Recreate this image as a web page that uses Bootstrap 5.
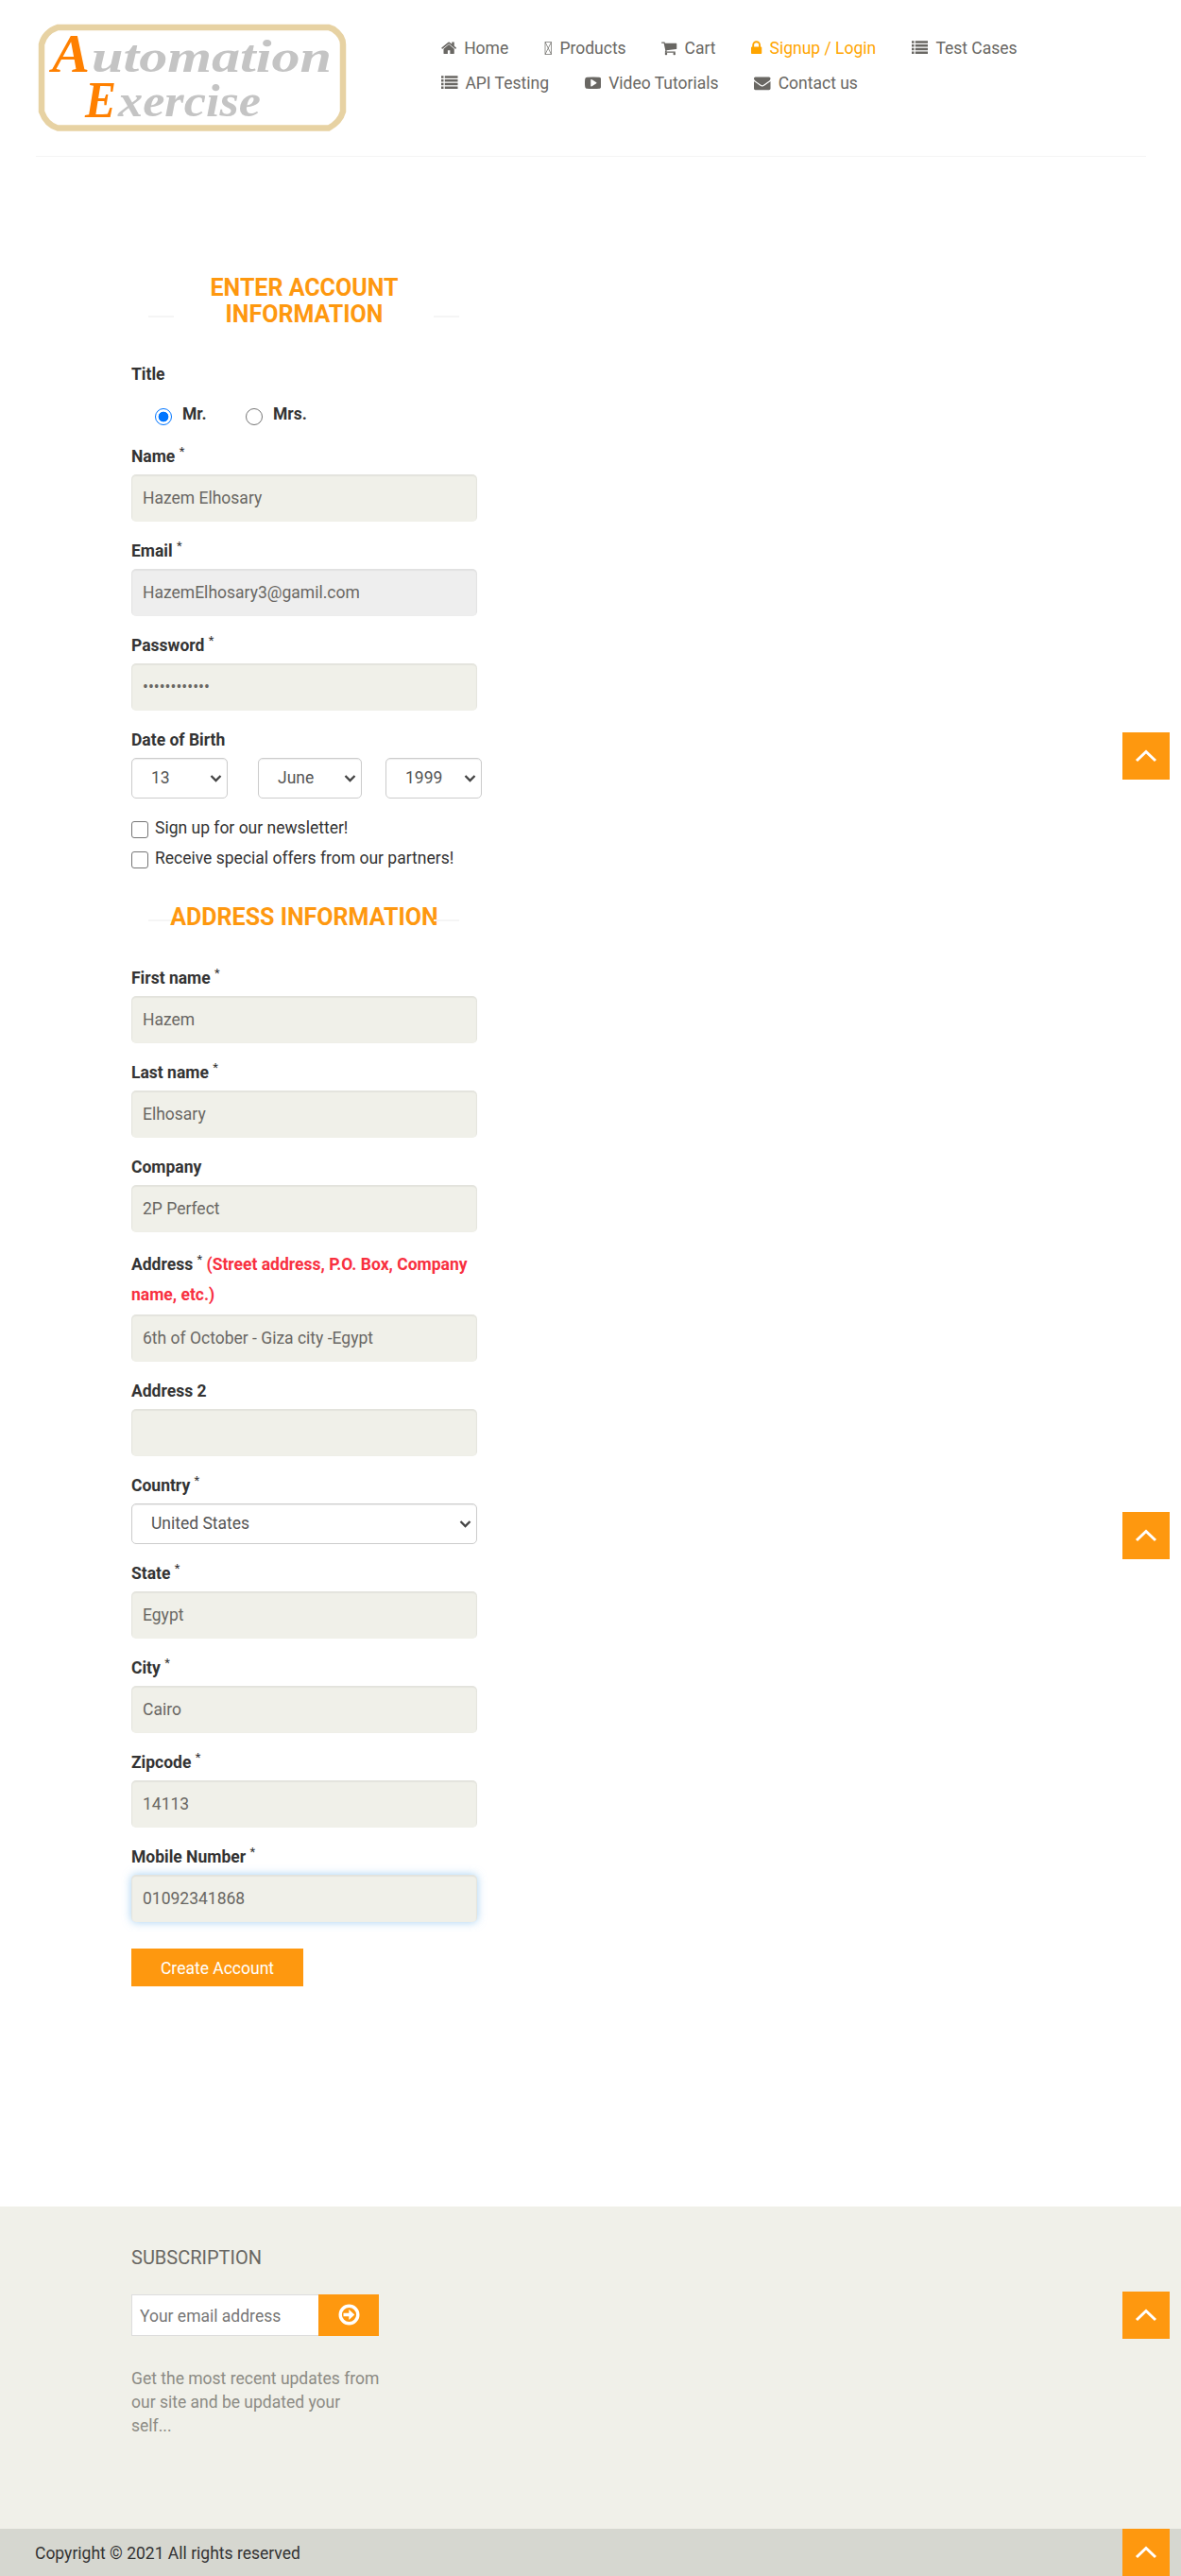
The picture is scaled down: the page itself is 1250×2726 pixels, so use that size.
<!DOCTYPE html>
<html lang="en">
<head>
<meta charset="utf-8">
<meta name="viewport" content="width=device-width, initial-scale=1">
<title>Automation Exercise - Signup</title>
<link href="https://cdn.jsdelivr.net/npm/bootstrap@5.3.0/dist/css/bootstrap.min.css" rel="stylesheet">
<style>
body{font-family:Roboto,sans-serif;font-size:17.5px;line-height:25px;color:#333;background:#fff;letter-spacing:0;position:relative}
.site-header{height:166px;margin:0 37px 0 38px;border-bottom:1px solid #f5f5f5}
.logo-link{display:block;width:328px;margin-top:25px;margin-left:2px}
.logo-link svg{display:block}
.top-nav{margin-left:99px;padding-top:33px;width:700px}
.top-nav .nav-list{column-gap:37.8px;row-gap:0}
.top-nav a{color:#696763;text-decoration:none;height:37px;line-height:37px;gap:7.900px;white-space:nowrap}
.top-nav a.current{color:orange}
.top-nav svg{fill:currentColor;height:17.5px;flex:none;margin-top:-1px}
.form-zone{width:366px;margin-left:139px;padding-top:125px;height:2168px}
.zone-title{font-size:25px;line-height:27.5px;font-weight:700;color:#fe980f;margin:0;text-align:center;text-transform:uppercase;position:relative}
.zone-title span{display:block;position:relative}
.zone-title::before,.zone-title::after{content:"";position:absolute;width:27px;height:2px;background:#f5f5f5;bottom:10px}
.zone-title::before{left:18px}
.zone-title::after{right:19px}
.second-title{margin:30px 0 38.5px}
.title-block{margin-top:38px}
.radio-row{height:25px;margin:17px 0 20px 25px}
.radio-row label{margin-left:11px;line-height:25px}
.radio-row .mr-text{width:67px}
.radio-row .choice{margin-top:6px!important}
.field{margin-bottom:19px}
.field-label{display:block;font-weight:700;line-height:25px;height:25px;margin-bottom:6px;color:#333}
.field-label sup{font-weight:400;font-size:75%;top:-.5em}
.tall-label{height:auto;line-height:32px;margin-top:-1px;margin-bottom:5px;position:relative;top:0}
.tall-label em{font-style:normal;color:#f8303f}
.entry{height:50px;border:0;border-radius:5px;background:#f0f0e9;color:#696763;font-size:17.5px;font-weight:400;padding:0 12px;box-shadow:inset 0 1px 1px 1px rgba(0,0,0,.05)}
.entry:disabled{background:#eee;opacity:1}
.entry:focus,.entry.active-entry{background:#f0f0e9;color:#696763;box-shadow:inset 0 1px 1px 1px rgba(0,0,0,.05),0 0 10px rgba(102,175,233,.6)}
.picker{height:43px;border:1px solid #ccc;border-radius:5px;color:#555;font-size:17.5px;padding:0 20px;box-shadow:inset 0 1px 1px rgba(0,0,0,.075);background-position:right 5px center;background-size:13px 13px;background-image:url("data:image/svg+xml,%3csvg xmlns='http://www.w3.org/2000/svg' viewBox='0 0 13 13'%3e%3cpath fill='none' stroke='%23444' stroke-width='2.3' d='M1.5 4l5 5 5-5'/%3e%3c/svg%3e")}
.day-pick{width:102px;margin-right:32px}
.month-pick{width:110px;margin-right:25px}
.year-pick{width:102px}
.birth-row{width:371px;margin-bottom:19px}
.opt-row{height:31.500px;align-items:flex-start}
.opt-row label{margin-left:7px}
.opt-row .choice{margin-top:5px!important}
.choice{width:18px;height:18px;margin:0;border:1px solid #767676;flex:none;background-color:#fff}
.choice:checked[type=radio]{background:#fff radial-gradient(circle,#0075ff 0 5px,#fff 5.7px);border:1.3px solid #0075ff}
.tick.form-check-input{border-radius:3px}
.orange-btn{background:#fe980f;border:0;border-radius:0;color:#fff;font-size:17.5px;font-weight:400}
.create-btn{width:182px;height:40px;margin-top:9px;padding:2px 0 0}
.site-footer{background:#f0f0e9;height:341px;padding:40px 0 0 139px;margin-top:1px}
.sub-title{font-size:20px;line-height:28px;font-weight:400;color:#696763;margin:0 0 25px}
.sub-mail{width:198px;height:44px;border:1px solid #ddd;border-right:0;border-radius:0;font-size:17.5px;padding:2px 8px 0;font-weight:400;color:#777}
.sub-mail::placeholder{color:#777}
.sub-go{width:64px;height:44px;padding:0 0 2px}
.sub-text{width:264px;color:#8c8b84;margin:33px 0 0}
.copy-bar{background:#d6d7d0;height:50px;padding:14px 37px 0;line-height:25px}
.to-top{position:absolute;left:1188px;width:50px;height:50px;background:#fe980f;display:flex;align-items:center;justify-content:center}
.top-a{top:775px}.top-b{top:1600px}.top-c{top:2425px}.top-d{top:2676px}
</style>
</head>
<body>
<header class="site-header d-flex align-items-start">
  <a class="logo-link" href="#" aria-label="Automation Exercise">
    <svg width="328" height="115" viewBox="0 0 328 115">
      <path d="M21 4H308L313 6Q323 13 323 22V93Q320 104 308 110.500H21Q9 107 4 93V22Q7 9 21 4Z" fill="#fff" stroke="#e7d2a3" stroke-width="6.500"/>
      <g font-family="'Liberation Serif', serif" font-style="italic" font-weight="700" font-size="49">
        <text x="15" y="51" fill="#ff8000" font-size="56" textLength="40" lengthAdjust="spacingAndGlyphs">A</text>
        <text x="57" y="51" fill="#c4c4c4" textLength="254" lengthAdjust="spacingAndGlyphs">utomation</text>
        <text x="50" y="99" fill="#ff8000" font-size="54" textLength="33" lengthAdjust="spacingAndGlyphs">E</text>
        <text x="85" y="98" fill="#c4c4c4" textLength="151" lengthAdjust="spacingAndGlyphs">xercise</text>
      </g>
    </svg>
  </a>
  <nav class="top-nav">
    <div class="nav-list d-flex flex-wrap">
      <a href="#" class="d-flex align-items-center"><svg width="16.25" viewBox="64 0 1664 1792"><path d="M1472 992v480q0 26-19 45t-45 19h-384v-384h-256v384h-384q-26 0-45-19t-19-45v-480q0-1 .5-3t.5-3l575-474 575 474q1 2 1 6zm223-69l-62 74q-8 9-21 11h-3q-13 0-21-7l-692-577-692 577q-12 8-24 7-13-2-21-11l-62-74q-8-10-7-23.500t11-21.500l719-599q32-26 76-26t76 26l244 204v-195q0-14 9-23t23-9h192q14 0 23 9t9 23v408l219 182q10 8 11 21.500t-7 23.500z"/></svg>Home</a>
      <a href="#" class="d-flex align-items-center"><svg width="8.500" viewBox="0 0 8.500 17.500"><path d="M1 2.500H7.500V15.500H1ZM1 2.500L7.500 15.500M7.500 2.500L1 15.500" fill="none" stroke="currentColor" stroke-width=".7"/></svg>Products</a>
      <a href="#" class="d-flex align-items-center"><svg width="16.25" viewBox="64 0 1664 1792"><path d="M704 1536q0 52-38 90t-90 38-90-38-38-90 38-90 90-38 90 38 38 90zm896 0q0 52-38 90t-90 38-90-38-38-90 38-90 90-38 90 38 38 90zm128-1088v512q0 24-16.500 42.500t-40.500 21.500l-1044 122q13 60 13 70 0 16-24 64h920q26 0 45 19t19 45-19 45-45 19h-1024q-26 0-45-19t-19-45q0-11 8-31.500t16-36 21.500-40 15.500-29.500l-177-823h-204q-26 0-45-19t-19-45 19-45 45-19h256q16 0 28.500 6.500t19.500 15.500 13 24.500 8 26 5.500 29.500 4.500 26h1201q26 0 45 19t19 45z"/></svg>Cart</a>
      <a href="#" class="current d-flex align-items-center"><svg width="11.25" viewBox="320 0 1152 1792"><path d="M640 768h512v-192q0-106-75-181t-181-75-181 75-75 181v192zm832 96v576q0 40-28 68t-68 28h-960q-40 0-68-28t-28-68v-576q0-40 28-68t68-28h32v-192q0-184 132-316t316-132 316 132 132 316v192h32q40 0 68 28t28 68z"/></svg>Signup / Login</a>
      <a href="#" class="d-flex align-items-center"><svg width="17.500" viewBox="0 0 1792 1792"><path d="M0 128h256v256H0zM384 128h1408v256H384zM0 512h256v256H0zM384 512h1408v256H384zM0 896h256v256H0zM384 896h1408v256H384zM0 1280h256v256H0zM384 1280h1408v256H384z"/></svg>Test Cases</a>
      <a href="#" class="d-flex align-items-center"><svg width="17.500" viewBox="0 0 1792 1792"><path d="M0 128h256v256H0zM384 128h1408v256H384zM0 512h256v256H0zM384 512h1408v256H384zM0 896h256v256H0zM384 896h1408v256H384zM0 1280h256v256H0zM384 1280h1408v256H384z"/></svg>API Testing</a>
      <a href="#" class="d-flex align-items-center"><svg width="17.500" viewBox="0 0 1792 1792"><path fill-rule="evenodd" d="M1280 896q0-37-30-54l-512-320q-31-20-65-2-33 18-33 56v640q0 38 33 56 16 8 31 8 20 0 34-10l512-320q30-17 30-54zm512 0q0 96-1 150t-8.500 136.500-22.500 147.500q-16 73-69 123t-124 58q-222 25-671 25t-671-25q-71-8-124.500-58t-69.500-123q-14-65-21.500-147.500t-8.500-136.500-1-150 1-150 8.500-136.500 22.500-147.500q16-73 69-123t124-58q222-25 671-25t671 25q71 8 124.500 58t69.500 123q14 65 21.500 147.500t8.500 136.500 1 150z"/></svg>Video Tutorials</a>
      <a href="#" class="d-flex align-items-center"><svg width="17.500" viewBox="0 0 1792 1792"><path d="M1792 710v794q0 66-47 113t-113 47h-1472q-66 0-113-47t-47-113v-794q44 49 101 87 362 246 497 345 57 42 92.500 65.500t94.500 48 110 24.500h2q51 0 110-24.500t94.500-48 92.500-65.500q170-123 498-345 57-39 100-87zm0-294q0 79-49 151t-122 123q-376 261-468 325-10 7-42.500 31t-54 38.500-52 32.500-57.500 27-50 9h-2q-23 0-50-9t-57.500-27-52-32.500-54-38.500-42.500-31q-91-64-262-182.500t-205-142.500q-62-42-117-115.500t-55-136.500q0-78 41.500-130t118.500-52h1472q65 0 112.500 47t47.500 113z"/></svg>Contact us</a>
    </div>
  </nav>
</header>

<main class="form-zone">
  <h2 class="zone-title"><span>Enter Account<br>Information</span></h2>
  <form>
    <div class="title-block">
      <label class="field-label mb-0">Title</label>
      <div class="radio-row d-flex align-items-start">
        <input class="form-check-input choice" type="radio" name="title" id="mr" checked><label for="mr" class="fw-bold mr-text">Mr.</label>
        <input class="form-check-input choice" type="radio" name="title" id="mrs"><label for="mrs" class="fw-bold">Mrs.</label>
      </div>
    </div>
    <div class="field"><label class="field-label">Name <sup>*</sup></label><input class="form-control entry" type="text" value="Hazem Elhosary"></div>
    <div class="field"><label class="field-label">Email <sup>*</sup></label><input class="form-control entry" type="text" value="HazemElhosary3@gamil.com" disabled></div>
    <div class="field"><label class="field-label">Password <sup>*</sup></label><input class="form-control entry" type="password" value="abcdefghijkl"></div>
    <div class="birth-block">
      <label class="field-label">Date of Birth</label>
      <div class="birth-row d-flex">
        <select class="form-select picker day-pick"><option>13</option></select>
        <select class="form-select picker month-pick"><option>June</option></select>
        <select class="form-select picker year-pick"><option>1999</option></select>
      </div>
    </div>
    <div class="opt-row d-flex"><input class="form-check-input choice tick" type="checkbox" id="news"><label for="news">Sign up for our newsletter!</label></div>
    <div class="opt-row d-flex"><input class="form-check-input choice tick" type="checkbox" id="offers"><label for="offers">Receive special offers from our partners!</label></div>

    <h2 class="zone-title second-title"><span>Address Information</span></h2>
    <div class="field"><label class="field-label">First name <sup>*</sup></label><input class="form-control entry" type="text" value="Hazem"></div>
    <div class="field"><label class="field-label">Last name <sup>*</sup></label><input class="form-control entry" type="text" value="Elhosary"></div>
    <div class="field"><label class="field-label">Company</label><input class="form-control entry" type="text" value="2P Perfect"></div>
    <div class="field"><label class="field-label tall-label">Address <sup>*</sup> <em>(Street address, P.O. Box, Company name, etc.)</em></label><input class="form-control entry" type="text" value="6th of October - Giza city -Egypt"></div>
    <div class="field"><label class="field-label">Address 2</label><input class="form-control entry" type="text"></div>
    <div class="field"><label class="field-label">Country <sup>*</sup></label><select class="form-select picker"><option>United States</option></select></div>
    <div class="field"><label class="field-label">State <sup>*</sup></label><input class="form-control entry" type="text" value="Egypt"></div>
    <div class="field"><label class="field-label">City <sup>*</sup></label><input class="form-control entry" type="text" value="Cairo"></div>
    <div class="field"><label class="field-label">Zipcode <sup>*</sup></label><input class="form-control entry" type="text" value="14113"></div>
    <div class="field"><label class="field-label">Mobile Number <sup>*</sup></label><input class="form-control entry active-entry" type="text" value="01092341868"></div>
    <button type="button" class="btn orange-btn create-btn">Create Account</button>
  </form>
</main>
<footer>
  <div class="site-footer">
    <h2 class="sub-title">SUBSCRIPTION</h2>
    <form class="d-flex">
      <input class="form-control sub-mail" type="email" placeholder="Your email address">
      <button type="button" class="btn orange-btn sub-go d-flex align-items-center justify-content-center" aria-label="Subscribe">
        <svg width="23" height="23" viewBox="0 0 23 23"><circle cx="11.500" cy="11.500" r="9.300" fill="none" stroke="#fff" stroke-width="3.400"/><path d="M5.500 9.700h5.800V6l6 5.500-6 5.500v-3.700H5.500z" fill="#fff"/></svg>
      </button>
    </form>
    <p class="sub-text">Get the most recent updates from our site and be updated your self...</p>
  </div>
  <div class="copy-bar">Copyright © 2021 All rights reserved</div>
</footer>
<a class="to-top top-a" href="#" aria-label="Top"><svg width="24" height="14" viewBox="0 0 24 14"><path d="M2 12L12 2.500 22 12" fill="none" stroke="#fff" stroke-width="3"/></svg></a>
<a class="to-top top-b" href="#" aria-label="Top"><svg width="24" height="14" viewBox="0 0 24 14"><path d="M2 12L12 2.500 22 12" fill="none" stroke="#fff" stroke-width="3"/></svg></a>
<a class="to-top top-c" href="#" aria-label="Top"><svg width="24" height="14" viewBox="0 0 24 14"><path d="M2 12L12 2.500 22 12" fill="none" stroke="#fff" stroke-width="3"/></svg></a>
<a class="to-top top-d" href="#" aria-label="Top"><svg width="24" height="14" viewBox="0 0 24 14"><path d="M2 12L12 2.500 22 12" fill="none" stroke="#fff" stroke-width="3"/></svg></a>
<script src="https://cdn.jsdelivr.net/npm/bootstrap@5.3.0/dist/js/bootstrap.bundle.min.js"></script>
</body>
</html>
